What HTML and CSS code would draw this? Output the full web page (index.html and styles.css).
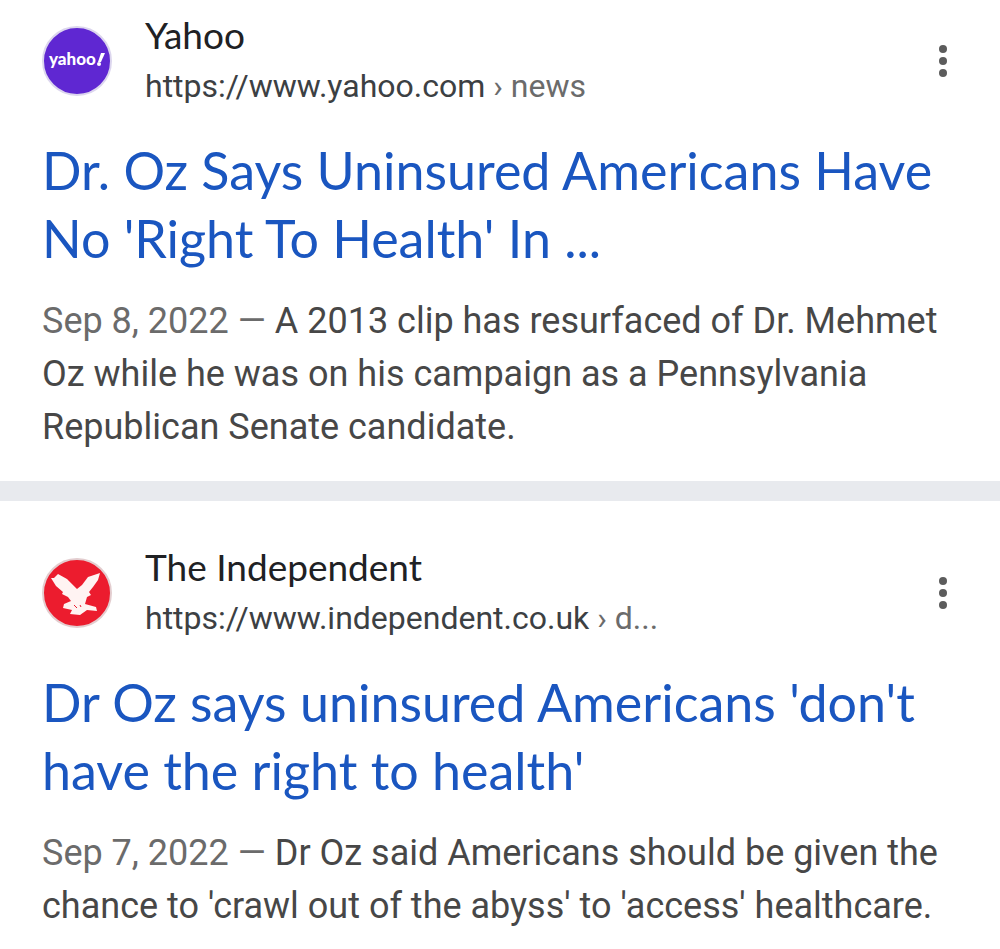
FILE: index.html
```html
<!DOCTYPE html>
<html lang="en">
<head>
<meta charset="utf-8">
<meta name="viewport" content="width=device-width, initial-scale=1">
<title>Search results</title>
<link rel="stylesheet" href="styles.css">
</head>
<body>
<main class="results">
  <article class="result">
    <header class="source">
      <svg class="favicon" viewBox="0 0 70 70" aria-hidden="true">
        <circle cx="35" cy="35" r="34" fill="#5f27d2" stroke="#dcd6ee" stroke-width="2"/>
        <text class="yahoo-mark" x="7" y="39">yahoo</text>
        <path d="M59 27h4l-4 9h-3z" fill="#fff"/><circle cx="57" cy="38" r="2" fill="#fff"/>
      </svg>
      <div class="site">
        <span class="site-name">Yahoo</span>
        <cite class="site-url">https://www.yahoo.com<span class="path"> › news</span></cite>
      </div>
      <button class="more" type="button" aria-label="About this result"><svg viewBox="0 0 8 32"><circle cx="4" cy="4" r="4"/><circle cx="4" cy="16" r="4"/><circle cx="4" cy="28" r="4"/></svg></button>
    </header>
    <h3 class="title"><a href="#yahoo">Dr. Oz Says Uninsured Americans Have<br>No 'Right To Health' In ...</a></h3>
    <p class="snippet"><span class="date">Sep 8, 2022 — </span>A 2013 clip has resurfaced of Dr. Mehmet Oz while he was on his campaign as a Pennsylvania Republican Senate candidate.</p>
  </article>
  <article class="result">
    <header class="source">
      <svg class="favicon" viewBox="0 0 70 70" aria-hidden="true">
        <circle cx="35" cy="35" r="34" fill="#ec1c2e" stroke="#e3cdcf" stroke-width="2"/>
        <path fill="#fff3f2" d="M9 20 12 20 16 16 25 21 35 31 40 27 46 19 58 15 56 22 51 29 47 34 49 37 45 39 43 46 54 49 55 53 45 52 38 57 28 56 30 52 21 50 22 46 29 43 26 39 20 36 21 34 14 28Z"/>
        <path d="M32 47 35 50M38 47 39 49" fill="none" stroke="#ec1c2e" stroke-width="1"/>
      </svg>
      <div class="site">
        <span class="site-name">The Independent</span>
        <cite class="site-url">https://www.independent.co.uk<span class="path"> › d...</span></cite>
      </div>
      <button class="more" type="button" aria-label="About this result"><svg viewBox="0 0 8 32"><circle cx="4" cy="4" r="4"/><circle cx="4" cy="16" r="4"/><circle cx="4" cy="28" r="4"/></svg></button>
    </header>
    <h3 class="title"><a href="#independent">Dr Oz says uninsured Americans 'don't<br>have the right to health'</a></h3>
    <p class="snippet"><span class="date">Sep 7, 2022 — </span>Dr Oz said Americans should be given the chance to 'crawl out of the abyss' to 'access' healthcare.</p>
  </article>
</main>
</body>
</html>
```
FILE: styles.css
```css
* { box-sizing: border-box; }
body { margin: 0; background: #fff; font-family: Roboto, sans-serif; color: #474747; }
.result { padding: 10px 42px 27px; }
.result + .result { border-top: 20px solid #e8eaee; padding-top: 41px; }
.source { display: flex; align-items: center; }
.favicon { width: 70px; height: 70px; flex: none; margin-right: 33px; }
.yahoo-mark { font: 900 17px Lato, sans-serif; fill: #fff; }
.site { flex: 1; min-width: 0; display: flex; flex-direction: column; }
.site-name { font: 37px/50px Lato, sans-serif; color: #202124; }
.site-url { font-style: normal; font-size: 32px; line-height: 52px; color: #3c4043; white-space: nowrap; }
.path { color: #6b6b6b; }
.more { border: 0; padding: 0; background: none; width: 32px; height: 48px; display: flex; align-items: center; justify-content: center; margin-right: -1px; }
.more svg { width: 8px; height: 32px; fill: #5c5c5c; }
.title { margin: 24px 0 0; font: 52px/68px Lato, sans-serif; white-space: nowrap; }
.title a { color: #1a56c0; text-decoration: none; }
.snippet { margin: 23px 0 0; font-size: 36px; line-height: 53px; }
.date { color: #6b6b6b; }
```
